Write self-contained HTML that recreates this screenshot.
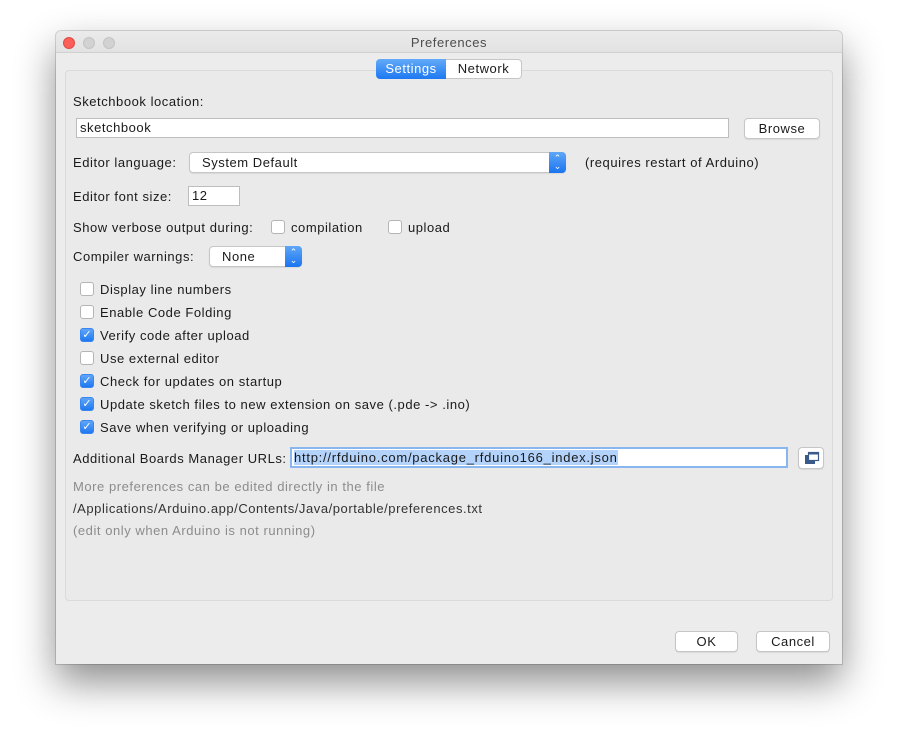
<!DOCTYPE html>
<html><head><style>
*{box-sizing:border-box;margin:0;padding:0}
body{width:898px;height:744px;background:#fff;font-family:"Liberation Sans",sans-serif;font-size:13px;letter-spacing:0.55px;color:#1a1a1a;position:relative;overflow:hidden}
.win{position:absolute;left:56px;top:31px;width:786px;height:633px;background:#ececec;border-radius:5px 5px 0 0;box-shadow:0 18px 40px rgba(0,0,0,.45),0 0 0 1px rgba(0,0,0,.15)}
.tb{position:absolute;left:0;top:0;width:786px;height:22px;border-bottom:1px solid #d0d0d0;background:linear-gradient(#ebebeb,#e2e2e2);border-radius:5px 5px 0 0;text-align:center;line-height:24px;color:#4d4d4d}
.dot{position:absolute;top:6px;width:12px;height:12px;border-radius:50%;background:#d2d2d2;border:1px solid #c4c4c4}
.a{position:absolute;white-space:nowrap}
.panel{position:absolute;left:65px;top:70px;width:768px;height:531px;border:1px solid #dadada;border-radius:4px;background:#eaeaea}
.inp{position:absolute;background:#fff;border:1px solid #bdbdbd;padding-left:3px;line-height:18px}
.btn{position:absolute;background:#fff;border:1px solid #c6c6c6;border-radius:4px;text-align:center;line-height:19px;box-shadow:0 1px 1px rgba(0,0,0,.08)}
.sel{position:absolute;background:#fff;border:1px solid #c6c6c6;border-radius:4px;line-height:19px;box-shadow:0 1px 1px rgba(0,0,0,.08)}
.arr{position:absolute;right:-1px;top:-1px;width:17px;bottom:-1px;background:linear-gradient(#5fa6f8,#1a74f0);border-radius:0 4px 4px 0;color:#fff;font-size:9px;text-align:center;line-height:8px;padding-top:2px;letter-spacing:0}
.cb{position:absolute;width:14px;height:14px;border:1px solid #b5b5b5;border-radius:3px;background:#fff}
.cb.on{background:linear-gradient(#5fa6f8,#1f78f0);border-color:#3a86f0;color:#fff;font-size:11px;line-height:13px;text-align:center;letter-spacing:0}
.g{color:#8c8c8c}
</style></head><body>
<div class="win">
<div class="tb">Preferences</div>
<div class="dot" style="left:7px;background:#fc5f57;border-color:#de4a43"></div>
<div class="dot" style="left:27px"></div>
<div class="dot" style="left:47px"></div>
</div>
<div class="panel"></div>
<div class="a" style="left:376px;top:59px;width:70px;height:20px;background:linear-gradient(#63aaf8,#1d78f1);border-radius:4px 0 0 4px;color:#fff;text-align:center;line-height:20px">Settings</div>
<div class="a" style="left:446px;top:59px;width:76px;height:20px;background:#fff;border:1px solid #c6c6c6;border-left:none;border-radius:0 4px 4px 0;text-align:center;line-height:18px">Network</div>

<div class="a" style="left:73px;top:94px">Sketchbook location:</div>
<div class="inp" style="left:76px;top:118px;width:653px;height:20px">sketchbook</div>
<div class="btn" style="left:744px;top:118px;width:76px;height:21px">Browse</div>

<div class="a" style="left:73px;top:155px">Editor language:</div>
<div class="sel" style="left:189px;top:152px;width:377px;height:21px;padding-left:12px">System Default<div class="arr">⌃<br>⌄</div></div>
<div class="a" style="left:585px;top:155px">(requires restart of Arduino)</div>

<div class="a" style="left:73px;top:189px">Editor font size:</div>
<div class="inp" style="left:188px;top:186px;width:52px;height:20px">12</div>

<div class="a" style="left:73px;top:220px">Show verbose output during:</div>
<div class="cb" style="left:271px;top:220px"></div>
<div class="a" style="left:291px;top:220px">compilation</div>
<div class="cb" style="left:388px;top:220px"></div>
<div class="a" style="left:408px;top:220px">upload</div>

<div class="a" style="left:73px;top:249px">Compiler warnings:</div>
<div class="sel" style="left:209px;top:246px;width:93px;height:21px;padding-left:12px">None<div class="arr">⌃<br>⌄</div></div>

<div class="cb" style="left:80px;top:282px"></div><div class="a" style="left:100px;top:282px">Display line numbers</div>
<div class="cb" style="left:80px;top:305px"></div><div class="a" style="left:100px;top:305px">Enable Code Folding</div>
<div class="cb on" style="left:80px;top:328px">✓</div><div class="a" style="left:100px;top:328px">Verify code after upload</div>
<div class="cb" style="left:80px;top:351px"></div><div class="a" style="left:100px;top:351px">Use external editor</div>
<div class="cb on" style="left:80px;top:374px">✓</div><div class="a" style="left:100px;top:374px">Check for updates on startup</div>
<div class="cb on" style="left:80px;top:397px">✓</div><div class="a" style="left:100px;top:397px">Update sketch files to new extension on save (.pde -&gt; .ino)</div>
<div class="cb on" style="left:80px;top:420px">✓</div><div class="a" style="left:100px;top:420px">Save when verifying or uploading</div>

<div class="a" style="left:73px;top:451px">Additional Boards Manager URLs:</div>
<div class="inp" style="left:290px;top:447px;width:498px;height:21px;border:2px solid #8ab6ef;padding-left:2px;line-height:17px;letter-spacing:0.75px"><span style="background:#b3d3fb">http://rfduino.com/package_rfduino166_index.json</span></div>
<div class="btn" style="left:798px;top:447px;width:26px;height:22px">
<svg width="16" height="14" viewBox="0 0 16 14" style="position:absolute;left:5px;top:3px"><rect x="1" y="4" width="10" height="9" fill="#3b5a8c"/><rect x="4.5" y="1.5" width="10" height="8" fill="#fff" stroke="#3b5a8c" stroke-width="1.2"/><rect x="4.5" y="1.5" width="10" height="2" fill="#3b5a8c"/></svg></div>

<div class="a g" style="left:73px;top:479px">More preferences can be edited directly in the file</div>
<div class="a" style="left:73px;top:501px;color:#333">/Applications/Arduino.app/Contents/Java/portable/preferences.txt</div>
<div class="a g" style="left:73px;top:523px">(edit only when Arduino is not running)</div>

<div class="btn" style="left:675px;top:631px;width:63px;height:21px">OK</div>
<div class="btn" style="left:756px;top:631px;width:74px;height:21px">Cancel</div>
</body></html>
